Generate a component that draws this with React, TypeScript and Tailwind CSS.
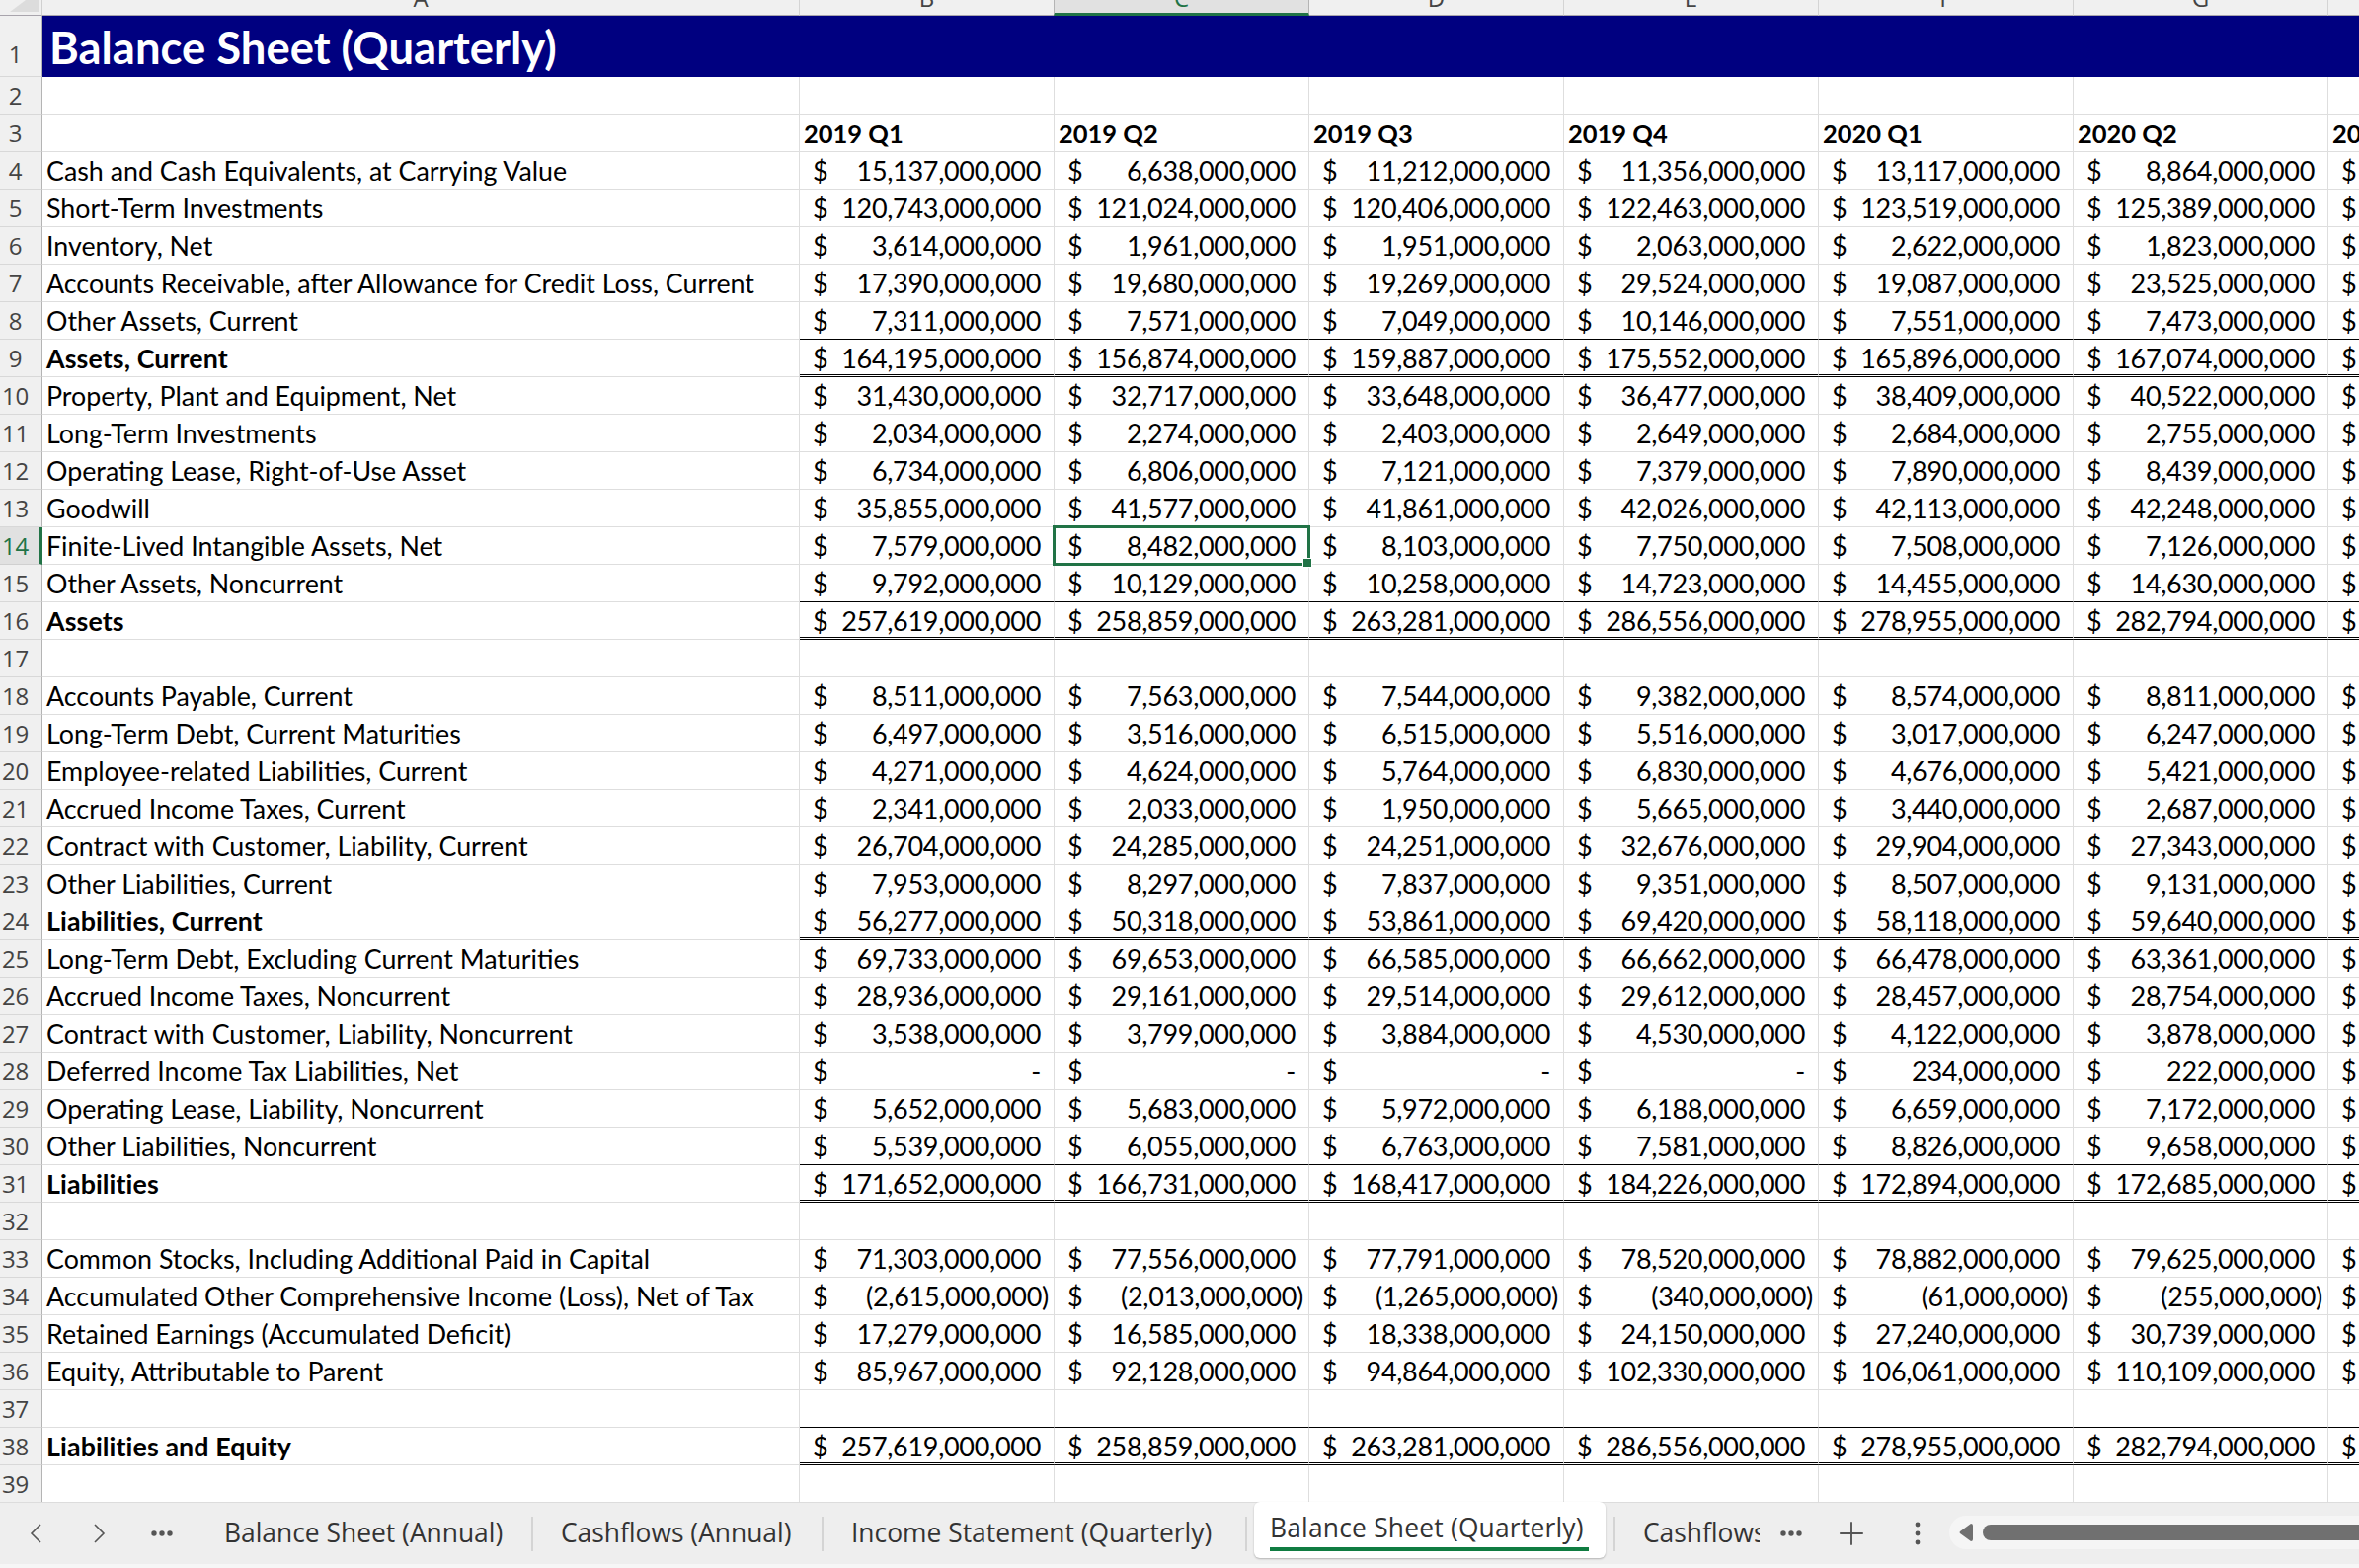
import React from 'react';
import { Plus } from 'lucide-react';

type Line = 'single' | 'double' | undefined;

type Row = {
  n: number;
  label?: string;
  values?: string[];
  bold?: boolean;
  line?: Line;
};

const ROWS: Row[] = [
  { n: 4, label: 'Cash and Cash Equivalents, at Carrying Value', values: ['15,137', '6,638', '11,212', '11,356', '13,117', '8,864'] },
  { n: 5, label: 'Short-Term Investments', values: ['120,743', '121,024', '120,406', '122,463', '123,519', '125,389'] },
  { n: 6, label: 'Inventory, Net', values: ['3,614', '1,961', '1,951', '2,063', '2,622', '1,823'] },
  { n: 7, label: 'Accounts Receivable, after Allowance for Credit Loss, Current', values: ['17,390', '19,680', '19,269', '29,524', '19,087', '23,525'] },
  { n: 8, label: 'Other Assets, Current', values: ['7,311', '7,571', '7,049', '10,146', '7,551', '7,473'], line: 'single' },
  { n: 9, label: 'Assets, Current', bold: true, values: ['164,195', '156,874', '159,887', '175,552', '165,896', '167,074'], line: 'double' },
  { n: 10, label: 'Property, Plant and Equipment, Net', values: ['31,430', '32,717', '33,648', '36,477', '38,409', '40,522'] },
  { n: 11, label: 'Long-Term Investments', values: ['2,034', '2,274', '2,403', '2,649', '2,684', '2,755'] },
  { n: 12, label: 'Operating Lease, Right-of-Use Asset', values: ['6,734', '6,806', '7,121', '7,379', '7,890', '8,439'] },
  { n: 13, label: 'Goodwill', values: ['35,855', '41,577', '41,861', '42,026', '42,113', '42,248'] },
  { n: 14, label: 'Finite-Lived Intangible Assets, Net', values: ['7,579', '8,482', '8,103', '7,750', '7,508', '7,126'] },
  { n: 15, label: 'Other Assets, Noncurrent', values: ['9,792', '10,129', '10,258', '14,723', '14,455', '14,630'], line: 'single' },
  { n: 16, label: 'Assets', bold: true, values: ['257,619', '258,859', '263,281', '286,556', '278,955', '282,794'], line: 'double' },
  { n: 17 },
  { n: 18, label: 'Accounts Payable, Current', values: ['8,511', '7,563', '7,544', '9,382', '8,574', '8,811'] },
  { n: 19, label: 'Long-Term Debt, Current Maturities', values: ['6,497', '3,516', '6,515', '5,516', '3,017', '6,247'] },
  { n: 20, label: 'Employee-related Liabilities, Current', values: ['4,271', '4,624', '5,764', '6,830', '4,676', '5,421'] },
  { n: 21, label: 'Accrued Income Taxes, Current', values: ['2,341', '2,033', '1,950', '5,665', '3,440', '2,687'] },
  { n: 22, label: 'Contract with Customer, Liability, Current', values: ['26,704', '24,285', '24,251', '32,676', '29,904', '27,343'] },
  { n: 23, label: 'Other Liabilities, Current', values: ['7,953', '8,297', '7,837', '9,351', '8,507', '9,131'], line: 'single' },
  { n: 24, label: 'Liabilities, Current', bold: true, values: ['56,277', '50,318', '53,861', '69,420', '58,118', '59,640'], line: 'double' },
  { n: 25, label: 'Long-Term Debt, Excluding Current Maturities', values: ['69,733', '69,653', '66,585', '66,662', '66,478', '63,361'] },
  { n: 26, label: 'Accrued Income Taxes, Noncurrent', values: ['28,936', '29,161', '29,514', '29,612', '28,457', '28,754'] },
  { n: 27, label: 'Contract with Customer, Liability, Noncurrent', values: ['3,538', '3,799', '3,884', '4,530', '4,122', '3,878'] },
  { n: 28, label: 'Deferred Income Tax Liabilities, Net', values: ['-', '-', '-', '-', '234', '222'] },
  { n: 29, label: 'Operating Lease, Liability, Noncurrent', values: ['5,652', '5,683', '5,972', '6,188', '6,659', '7,172'] },
  { n: 30, label: 'Other Liabilities, Noncurrent', values: ['5,539', '6,055', '6,763', '7,581', '8,826', '9,658'], line: 'single' },
  { n: 31, label: 'Liabilities', bold: true, values: ['171,652', '166,731', '168,417', '184,226', '172,894', '172,685'], line: 'double' },
  { n: 32 },
  { n: 33, label: 'Common Stocks, Including Additional Paid in Capital', values: ['71,303', '77,556', '77,791', '78,520', '78,882', '79,625'] },
  { n: 34, label: 'Accumulated Other Comprehensive Income (Loss), Net of Tax', values: ['(2,615', '(2,013', '(1,265', '(340', '(61', '(255'] },
  { n: 35, label: 'Retained Earnings (Accumulated Deficit)', values: ['17,279', '16,585', '18,338', '24,150', '27,240', '30,739'] },
  { n: 36, label: 'Equity, Attributable to Parent', values: ['85,967', '92,128', '94,864', '102,330', '106,061', '110,109'] },
  { n: 37, line: 'single' },
  { n: 38, label: 'Liabilities and Equity', bold: true, values: ['257,619', '258,859', '263,281', '286,556', '278,955', '282,794'], line: 'double' },
];

const QUARTERS = ['2019 Q1', '2019 Q2', '2019 Q3', '2019 Q4', '2020 Q1', '2020 Q2', '2020 Q3'];

const lineClass = (line: Line) => {
  if (line === 'single') return 'border-b border-black';
  if (line === 'double') return 'border-b-[3px] border-double border-black';
  return 'border-b border-[#dedede]';
};

function RowHeader({ n, selected }: { n: number; selected?: boolean }) {
  return (
    <div
      className={
        selected
          ? 'w-[43px] shrink-0 h-full pr-[9px] text-center bg-[#e1e1e1] text-[#217346] border-r-[3px] border-r-[#217346] border-b border-b-[#d0d0d0] text-[24px] leading-[38px] [font-family:"Open_Sans",sans-serif] tracking-[-0.3px]'
          : 'w-[43px] shrink-0 h-full pr-[11px] text-center bg-[#f0f0f0] text-[#444444] border-r border-r-[#b4b4b4] border-b border-b-[#d8d8d8] text-[24px] leading-[38px] [font-family:"Open_Sans",sans-serif] tracking-[-0.3px]'
      }
    >
      {n}
    </div>
  );
}

function LabelCell({ label, bold }: { label?: string; bold?: boolean }) {
  return (
    <div
      className={`w-[767px] shrink-0 h-full pl-[4px] border-r border-b border-[#dedede] text-black text-[26.8px] leading-[38px] whitespace-nowrap overflow-hidden ${bold ? 'font-bold tracking-[0.1px]' : ''}`}
    >
      {label}
    </div>
  );
}

const moneyPadding = (value: string) => {
  if (value.startsWith('(')) return 'pr-[5px]';
  return 'pr-[13px]';
};

function MoneyCell({ value, line, selected, last }: { value?: string; line: Line; selected?: boolean; last?: boolean }) {
  const negative = value?.startsWith('(');
  const text = !value || value === '-' ? value : value + (negative ? ',000,000)' : ',000,000');
  return (
    <div className={`relative w-[258px] shrink-0 h-full border-r border-r-[#dedede] ${lineClass(line)}`}>
      {value !== undefined && (
        <div className={`flex justify-between pl-[13px] text-black text-[27px] leading-[38px] ${moneyPadding(value)}`}>
          <span>$</span>
          <span className="tracking-[-0.3px]">{text}</span>
        </div>
      )}
      {last && (
        <div className="pl-[13px] text-black text-[27px] leading-[38px]">$</div>
      )}
      {selected && (
        <>
          <div className="absolute -left-[2px] -top-[2px] -right-[2px] -bottom-[2px] border-[3px] border-[#217346] z-10" />
          <div className="absolute -right-[4px] -bottom-[4px] w-[10px] h-[10px] bg-[#217346] border border-white z-20" />
        </>
      )}
    </div>
  );
}

function SheetRow({ row }: { row: Row }) {
  return (
    <div className="flex h-[38px]">
      <RowHeader n={row.n} selected={row.n === 14} />
      <LabelCell label={row.label} bold={row.bold} />
      {[0, 1, 2, 3, 4, 5].map((i) => (
        <MoneyCell key={i} value={row.values?.[i]} line={row.line} selected={row.n === 14 && i === 1} />
      ))}
      <MoneyCell line={row.line} last={!!row.values} />
    </div>
  );
}

function ColumnHeaders() {
  return (
    <div className="flex h-[16px] shrink-0 overflow-hidden">
      <div className="w-[43px] shrink-0 h-full bg-[#f0f0f0] border-r border-r-[#d0d0d0] border-b border-b-[#a8a4ac]">
        <svg width="42" height="15" viewBox="0 0 42 15">
          <polygon points="10,12 39,12 39,0 26,0" fill="#dcdcdc" />
        </svg>
      </div>
      {['A', 'B', 'C', 'D', 'E', 'F', 'G', ''].map((c, i) => (
        <div
          key={i}
          className={
            c === 'C'
              ? 'w-[259px] shrink-0 h-full bg-[#e1e1e1] text-[#217346] border-l border-r border-[#b4b4b4] border-b-[3px] border-b-[#217346] -ml-px overflow-hidden text-center text-[24px] [font-family:"Open_Sans",sans-serif]'
              : `${c === 'A' ? 'w-[767px]' : 'w-[258px]'} shrink-0 h-full bg-[#f0f0f0] text-[#444444] border-r border-r-[#d4d4d4] border-b border-b-[#a8a4ac] overflow-hidden text-center text-[24px] [font-family:"Open_Sans",sans-serif]`
          }
        >
          <div className="-mt-[14px] leading-[24px]">{c}</div>
        </div>
      ))}
    </div>
  );
}

function Separator() {
  return <div className="w-[2px] h-[35px] shrink-0 bg-[#d4d4d4]" />;
}

function TabBar() {
  return (
    <div className="flex flex-col shrink-0">
      <div className="flex items-center h-[63px] bg-[#eeeeee] border-t border-[#dcdcdc] pl-[30px] text-[#333333] text-[26.4px] whitespace-nowrap [font-family:'Open_Sans',sans-serif]">
        <svg width="12" height="20" viewBox="0 0 12 20" className="shrink-0" fill="none" stroke="#555555" strokeWidth="1.6">
          <path d="M11 1 L2 10 L11 19" />
        </svg>
        <svg width="12" height="20" viewBox="0 0 12 20" className="shrink-0 ml-[53px]" fill="none" stroke="#555555" strokeWidth="1.6">
          <path d="M1 1 L10 10 L1 19" />
        </svg>
        <svg width="22" height="6" viewBox="0 0 22 6" className="shrink-0 ml-[46px]" fill="#555555">
          <circle cx="3" cy="3" r="2.7" />
          <circle cx="11" cy="3" r="2.7" />
          <circle cx="19" cy="3" r="2.7" />
        </svg>
        <div className="w-[341px] shrink-0 ml-[22px] pl-[30px]">Balance Sheet (Annual)</div>
        <Separator />
        <div className="w-[292px] shrink-0 pl-[28px]">Cashflows (Annual)</div>
        <Separator />
        <div className="w-[427px] shrink-0 pl-[28px]">Income Statement (Quarterly)</div>
        <Separator />
        <div className="relative self-start -mt-px ml-[7px] w-[356px] h-[57px] shrink-0 bg-white rounded-[6px] shadow-[0_1px_2px_rgba(0,0,0,0.25)] pl-[16px] pt-[8px] leading-[36px] font-medium tracking-[0.2px]">
          Balance Sheet (Quarterly)
          <div className="absolute left-[16px] right-[17px] bottom-[7px] h-[4px] bg-[#107c41]" />
        </div>
        <div className="ml-[8px]">
          <Separator />
        </div>
        <div className="w-[118px] shrink-0 ml-[28px] overflow-hidden">Cashflows (Quarterly)</div>
        <svg width="22" height="6" viewBox="0 0 22 6" className="shrink-0 ml-[21px]" fill="#555555">
          <circle cx="3" cy="3" r="2.7" />
          <circle cx="11" cy="3" r="2.7" />
          <circle cx="19" cy="3" r="2.7" />
        </svg>
        <Plus className="shrink-0 ml-[31px] w-[38px] h-[38px] text-[#555555]" strokeWidth={1.2} />
        <svg width="6" height="24" viewBox="0 0 6 24" className="shrink-0 ml-[45px]" fill="#555555">
          <circle cx="3" cy="3" r="2.4" />
          <circle cx="3" cy="12" r="2.4" />
          <circle cx="3" cy="21" r="2.4" />
        </svg>
        <div className="flex items-center ml-[29px] h-[34px] flex-1 rounded-l-[17px] bg-[#f5f5f5] pl-[10px] -mt-[2px]">
          <svg width="14" height="18" viewBox="0 0 14 18" fill="#707070" className="shrink-0">
            <path d="M12 0 Q14 0 14 2 L14 16 Q14 18 12 18 L1 10 Q0 9 1 8 Z" />
          </svg>
          <div className="ml-[10px] h-[16px] flex-1 bg-[#707070] rounded-l-[8px]" />
        </div>
      </div>
      <div className="h-[4px] bg-[#f6f6f6]" />
    </div>
  );
}

export default function App() {
  return (
    <div className="w-[2389px] h-[1588px] overflow-hidden flex flex-col bg-white [font-family:Lato,sans-serif]">
      <ColumnHeaders />
      <div className="flex h-[62px] shrink-0">
        <div className="w-[43px] shrink-0 h-full pr-[11px] pt-[20px] text-center bg-[#f0f0f0] text-[#444444] border-r border-r-[#b4b4b4] border-b border-b-[#d8d8d8] text-[24px] leading-[38px] [font-family:'Open_Sans',sans-serif]">
          1
        </div>
        <div className="flex-1 bg-[#000080] text-white font-bold text-[45.4px] leading-[64px] pl-[7px]">Balance Sheet (Quarterly)</div>
      </div>
      <div className="flex h-[38px] shrink-0">
        <RowHeader n={2} />
        <LabelCell />
        {QUARTERS.map((q) => (
          <MoneyCell key={q} line={undefined} />
        ))}
      </div>
      <div className="flex h-[38px] shrink-0">
        <RowHeader n={3} />
        <LabelCell />
        {QUARTERS.map((q) => (
          <div key={q} className="w-[258px] shrink-0 h-full pl-[4px] border-r border-b border-[#dedede] font-bold text-black text-[25.5px] leading-[38px] whitespace-nowrap">
            {q}
          </div>
        ))}
      </div>
      {ROWS.map((row) => (
        <SheetRow key={row.n} row={row} />
      ))}
      <div className="flex h-[37px] shrink-0">
        <div className="w-[43px] shrink-0 h-full pr-[11px] text-center bg-[#f0f0f0] text-[#444444] border-r border-r-[#b4b4b4] text-[24px] leading-[38px] [font-family:'Open_Sans',sans-serif] tracking-[-0.3px]">
          39
        </div>
        <div className="w-[767px] shrink-0 h-full border-r border-[#dedede]" />
        {QUARTERS.map((q) => (
          <div key={q} className="w-[258px] shrink-0 h-full border-r border-[#dedede]" />
        ))}
      </div>
      <TabBar />
    </div>
  );
}
